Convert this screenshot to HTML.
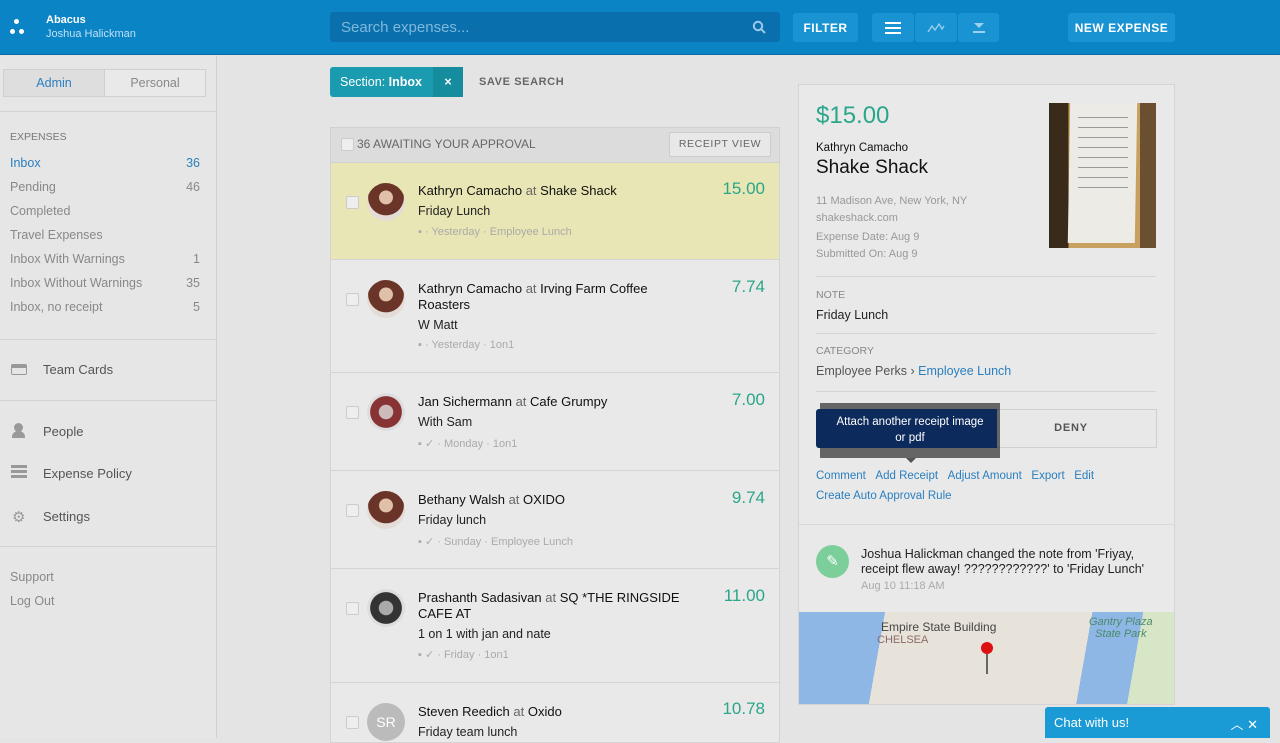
<!DOCTYPE html>
<html><head><meta charset="utf-8"><style>
*{box-sizing:border-box;margin:0;padding:0}
body{width:1280px;height:738px;overflow:hidden;background:#e4e4e4;font-family:"Liberation Sans",Arial,sans-serif;position:relative;color:#222}
.a{position:absolute}
.hdr{left:0;top:0;width:1280px;height:55px;background:#0b84c6;border-bottom:1px solid #0a6aa3}
.btn{background:#1a93d2;border-radius:3px;color:#fff;font-weight:bold;font-size:12px;letter-spacing:.5px;display:flex;align-items:center;justify-content:center}
.side{left:0;top:56px;width:217px;height:682px;border-right:1px solid #d0d0d0;background:#e6e6e6}
.sl{left:10px;font-size:12.5px;color:#888;width:190px;display:flex;justify-content:space-between}
.hr{height:1px;background:#d2d2d2;left:0;width:217px}
.ni{left:43px;font-size:13px;color:#555}
.row{left:330px;width:450px;border:1px solid #d4d4d4;border-top:none;background:#e9e9e9}
.cb{position:absolute;left:15px;width:13px;height:13px;border:1px solid #ccc;border-radius:2px;background:#eee}
.av{position:absolute;left:36px;width:38px;height:38px;border-radius:50%;background:radial-gradient(circle at 50% 38%,#e0c0a8 0 22%,#6a3428 24% 58%,#e4dcd6 60%)}
.t{position:absolute;left:87px;font-size:13px;color:#111;width:300px;line-height:16px}
.t b{font-weight:normal;color:#111}
.t span{color:#666}
.n{position:absolute;left:87px;font-size:12.5px;color:#222}
.m{position:absolute;left:87px;font-size:11px;color:#aaa}
.amt{position:absolute;right:14px;font-size:17px;color:#2aa68a}
.lbl{font-size:10.5px;color:#888;left:816px}
.lnk{color:#2a7fbf;font-size:11.5px}
</style></head><body>
<div class="a hdr"></div>
<div class="a" style="top:19px;width:5px;height:5px;border-radius:50%;background:#fff;left:14px"></div>
<div class="a" style="left:10px;top:29px;width:5px;height:5px;border-radius:50%;background:#fff"></div>
<div class="a" style="left:19px;top:29px;width:5px;height:5px;border-radius:50%;background:#fff"></div>
<div class="a" style="left:46px;top:14px;color:#fff;font-size:11px;font-weight:bold">Abacus</div>
<div class="a" style="left:46px;top:28px;color:#bfe0f3;font-size:11px">Joshua Halickman</div>
<div class="a" style="left:330px;top:12px;width:450px;height:30px;background:#0a70ad;border-radius:3px;color:#7fb8dc;font-size:15px;padding:7px 11px">Search expenses...</div>
<svg class="a" style="left:752px;top:20px" width="14" height="14" viewBox="0 0 14 14"><circle cx="6" cy="6" r="4.2" fill="none" stroke="#9cc9e8" stroke-width="2"/><path d="M9 9l4 4" stroke="#9cc9e8" stroke-width="2"/></svg>
<div class="a btn" style="left:793px;top:13px;width:65px;height:29px">FILTER</div>
<div class="a btn" style="left:872px;top:13px;width:42px;height:29px"><svg width="16" height="12"><path d="M0 1h16M0 6h16M0 11h16" stroke="#fff" stroke-width="2"/></svg></div>
<div class="a btn" style="left:915px;top:13px;width:42px;height:29px"><svg width="18" height="10"><path d="M1 9l4-6 3 4 4-6 3 5 2-3" stroke="#9cd0ee" stroke-width="1.3" fill="none"/></svg></div>
<div class="a btn" style="left:958px;top:13px;width:41px;height:29px"><svg width="14" height="10"><path d="M2 0h10L7 5z" fill="#9cd0ee"/><path d="M1 9h12" stroke="#9cd0ee" stroke-width="2"/></svg></div>
<div class="a btn" style="left:1068px;top:13px;width:107px;height:29px">NEW EXPENSE</div>

<div class="a side"></div>
<div class="a" style="left:3px;top:69px;width:203px;height:28px;border:1px solid #d0d0d0;display:flex;font-size:12.5px">
<div style="flex:1;background:#dedede;color:#2a7fbf;text-align:center;line-height:26px;border-right:1px solid #d0d0d0">Admin</div>
<div style="flex:1;color:#888;text-align:center;line-height:26px;background:#e9e9e9">Personal</div></div>
<div class="a hr" style="top:111px"></div>
<div class="a" style="left:10px;top:131px;font-size:10.5px;color:#777">EXPENSES</div>
<div class="a sl" style="top:156px;color:#2a7fbf"><span>Inbox</span><span>36</span></div>
<div class="a sl" style="top:180px"><span>Pending</span><span>46</span></div>
<div class="a sl" style="top:204px"><span>Completed</span><span></span></div>
<div class="a sl" style="top:228px"><span>Travel Expenses</span><span></span></div>
<div class="a sl" style="top:252px"><span>Inbox With Warnings</span><span>1</span></div>
<div class="a sl" style="top:276px"><span>Inbox Without Warnings</span><span>35</span></div>
<div class="a sl" style="top:300px"><span>Inbox, no receipt</span><span>5</span></div>
<div class="a hr" style="top:339px"></div>
<div class="a" style="left:11px;top:364px;width:16px;height:11px;border:1.5px solid #999;border-top-width:4px;border-radius:2px"></div>
<div class="a ni" style="top:362px">Team Cards</div>
<div class="a hr" style="top:400px"></div>
<div class="a" style="left:14px;top:423px;width:9px;height:9px;border-radius:50%;background:#999"></div>
<div class="a" style="left:12px;top:431px;width:13px;height:7px;border-radius:6px 6px 0 0;background:#999"></div>
<div class="a ni" style="top:424px">People</div>
<div class="a" style="left:11px;top:465px;width:16px;height:14px;background:repeating-linear-gradient(#999 0 3px,transparent 3px 5px)"></div>
<div class="a ni" style="top:466px">Expense Policy</div>
<div class="a" style="left:12px;top:508px;font-size:15px;color:#999">⚙</div>
<div class="a ni" style="top:509px">Settings</div>
<div class="a hr" style="top:546px"></div>
<div class="a sl" style="top:570px"><span>Support</span></div>
<div class="a sl" style="top:594px"><span>Log Out</span></div>

<div class="a" style="left:330px;top:67px;width:133px;height:30px;background:#1a9bb0;border-radius:3px;color:#fff;font-size:12.5px;display:flex;align-items:center">
<span style="padding-left:10px;width:103px">Section: <b>Inbox</b></span><span style="width:30px;height:30px;background:#168c9f;display:flex;align-items:center;justify-content:center;font-weight:bold">×</span></div>
<div class="a" style="left:479px;top:76px;font-size:11px;font-weight:bold;color:#666;letter-spacing:.6px">SAVE SEARCH</div>

<div class="a" style="left:330px;top:127px;width:450px;height:36px;background:#dcdcdc;border:1px solid #d0d0d0"></div>
<div class="a cb" style="left:341px;top:138px;position:absolute"></div>
<div class="a" style="left:357px;top:137px;font-size:12px;color:#666">36 AWAITING YOUR APPROVAL</div>
<div class="a" style="left:669px;top:132px;width:102px;height:25px;border:1px solid #ccc;background:#e8e8e8;border-radius:2px;font-size:10.5px;color:#666;letter-spacing:.6px;text-align:center;line-height:23px">RECEIPT VIEW</div>

<div class="a row" style="top:163px;height:97px;background:#e8e6b4">
<div class="cb" style="top:33px"></div><div class="av" style="top:20px"></div>
<div class="t" style="top:20px"><b>Kathryn Camacho</b> <span>at</span> <b>Shake Shack</b></div>
<div class="n" style="top:41px">Friday Lunch</div>
<div class="m" style="top:63px">▪ · Yesterday · Employee Lunch</div>
<div class="amt" style="top:16px">15.00</div></div>

<div class="a row" style="top:260px;height:113px">
<div class="cb" style="top:33px"></div><div class="av" style="top:20px"></div>
<div class="t" style="top:21px;width:240px"><b>Kathryn Camacho</b> <span>at</span> <b>Irving Farm Coffee Roasters</b></div>
<div class="n" style="top:58px">W Matt</div>
<div class="m" style="top:79px">▪ · Yesterday · 1on1</div>
<div class="amt" style="top:17px">7.74</div></div>

<div class="a row" style="top:373px;height:98px">
<div class="cb" style="top:33px"></div><div class="av" style="top:20px;background:radial-gradient(circle,#cbb 0 26%,#833 28% 58%,#ddd 60%)"></div>
<div class="t" style="top:21px"><b>Jan Sichermann</b> <span>at</span> <b>Cafe Grumpy</b></div>
<div class="n" style="top:42px">With Sam</div>
<div class="m" style="top:64px">▪ ✓ · Monday · 1on1</div>
<div class="amt" style="top:17px">7.00</div></div>

<div class="a row" style="top:471px;height:98px">
<div class="cb" style="top:33px"></div><div class="av" style="top:20px"></div>
<div class="t" style="top:21px"><b>Bethany Walsh</b> <span>at</span> <b>OXIDO</b></div>
<div class="n" style="top:42px">Friday lunch</div>
<div class="m" style="top:64px">▪ ✓ · Sunday · Employee Lunch</div>
<div class="amt" style="top:17px">9.74</div></div>

<div class="a row" style="top:569px;height:114px">
<div class="cb" style="top:33px"></div><div class="av" style="top:20px;background:radial-gradient(circle,#aaa 0 26%,#333 28% 58%,#ddd 60%)"></div>
<div class="t" style="top:21px;width:270px"><b>Prashanth Sadasivan</b> <span>at</span> <b>SQ *THE RINGSIDE CAFE AT</b></div>
<div class="n" style="top:58px">1 on 1 with jan and nate</div>
<div class="m" style="top:79px">▪ ✓ · Friday · 1on1</div>
<div class="amt" style="top:17px">11.00</div></div>

<div class="a row" style="top:683px;height:60px">
<div class="cb" style="top:33px"></div><div class="av" style="top:20px;background:#bbb;color:#fff;font-size:14px;text-align:center;line-height:38px">SR</div>
<div class="t" style="top:21px"><b>Steven Reedich</b> <span>at</span> <b>Oxido</b></div>
<div class="n" style="top:42px">Friday team lunch</div>
<div class="amt" style="top:16px">10.78</div></div>

<div class="a" style="left:798px;top:84px;width:377px;height:621px;background:#e9e9e9;border:1px solid #d4d4d4"></div>
<div class="a" style="left:816px;top:102px;font-size:24px;color:#2aa68a">$15.00</div>
<div class="a" style="left:816px;top:142px;font-size:11.5px;color:#111">Kathryn Camacho</div>
<div class="a" style="left:816px;top:157px;font-size:19px;color:#111">Shake Shack</div>
<div class="a" style="left:816px;top:193px;font-size:11px;color:#999;line-height:16.5px">11 Madison Ave, New York, NY<br>shakeshack.com</div>
<div class="a" style="left:816px;top:229px;font-size:11px;color:#999;line-height:16.5px">Expense Date: Aug 9<br>Submitted On: Aug 9</div>
<div class="a" style="left:1049px;top:103px;width:107px;height:145px;background:linear-gradient(90deg,#3a2a1a 0 18%,#c8a060 18% 85%,#6a5030 85%)"></div>
<div class="a" style="left:1069px;top:103px;width:67px;height:140px;background:#ecebe6;transform:skewX(-1deg)"></div>
<div class="a" style="left:1078px;top:112px;width:50px;height:80px;background:repeating-linear-gradient(#ecebe6 0 5px,#999 5px 6px,#ecebe6 6px 10px)"></div>
<div class="a" style="left:816px;top:276px;width:340px;height:1px;background:#d4d4d4"></div>
<div class="a lbl" style="top:289px">NOTE</div>
<div class="a" style="left:816px;top:308px;font-size:12.5px">Friday Lunch</div>
<div class="a" style="left:816px;top:333px;width:340px;height:1px;background:#d4d4d4"></div>
<div class="a lbl" style="top:345px">CATEGORY</div>
<div class="a" style="left:816px;top:364px;font-size:12.5px;color:#555">Employee Perks › <span style="color:#2a7fbf">Employee Lunch</span></div>
<div class="a" style="left:816px;top:391px;width:340px;height:1px;background:#d4d4d4"></div>
<div class="a" style="left:816px;top:409px;width:170px;height:39px;background:#0c2a5c;border-radius:3px 0 0 3px"></div>
<div class="a" style="left:985px;top:409px;width:172px;height:39px;border:1px solid #d0d0d0;background:#e8e8e8;font-size:11px;font-weight:bold;color:#555;letter-spacing:.8px;text-align:center;line-height:37px">DENY</div>
<div class="a" style="left:820px;top:403px;width:180px;height:55px;background:rgba(30,30,30,.65)"></div>
<div class="a" style="left:820px;top:409px;width:177px;height:39px;background:#0c2a5c"></div>
<div class="a" style="left:820px;top:414px;width:180px;color:#fff;font-size:11.5px;text-align:center;line-height:16px">Attach another receipt image<br>or pdf</div>
<div class="a" style="left:906px;top:458px;border:5px solid transparent;border-top-color:#555"></div>
<div class="a lnk" style="left:816px;top:470px">Comment &nbsp;&nbsp;Add Receipt &nbsp;&nbsp;Adjust Amount &nbsp;&nbsp;Export &nbsp;&nbsp;Edit</div>
<div class="a lnk" style="left:816px;top:490px">Create Auto Approval Rule</div>
<div class="a" style="left:799px;top:524px;width:375px;height:1px;background:#d8d8d8"></div>
<div class="a" style="left:816px;top:545px;width:33px;height:33px;border-radius:50%;background:#7ccf9a;color:#fff;text-align:center;line-height:33px;font-size:15px">✎</div>
<div class="a" style="left:861px;top:547px;font-size:12.5px;line-height:15px;width:300px">Joshua Halickman changed the note from 'Friyay, receipt flew away! ????????????' to 'Friday Lunch'</div>
<div class="a" style="left:861px;top:580px;font-size:11px;color:#aaa">Aug 10 11:18 AM</div>
<div class="a" style="left:799px;top:612px;width:375px;height:92px;background:linear-gradient(100deg,#8fb7e6 0 22%,#e8e3da 22% 75%,#8fb7e6 75% 88%,#d8e6c8 88%);overflow:hidden">
<div class="a" style="left:82px;top:8px;font-size:12px;color:#444">Empire State Building</div>
<div class="a" style="left:78px;top:22px;font-size:11px;color:#8a6a6a">CHELSEA</div>
<div class="a" style="left:290px;top:4px;font-size:11px;color:#4a8a6a;text-align:center;font-style:italic">Gantry Plaza<br>State Park</div>
<div class="a" style="left:182px;top:30px;width:12px;height:12px;border-radius:50%;background:#d11"></div>
<div class="a" style="left:187px;top:42px;width:2px;height:20px;background:#666"></div></div>
<div class="a" style="left:1045px;top:707px;width:225px;height:31px;background:#1a9bd6;border-radius:3px 3px 0 0;color:#fff;font-size:13px;padding:8px 9px">Chat with us!<span style="position:absolute;right:12px;top:7px;font-size:13px">︿ ✕</span></div>
</body></html>
